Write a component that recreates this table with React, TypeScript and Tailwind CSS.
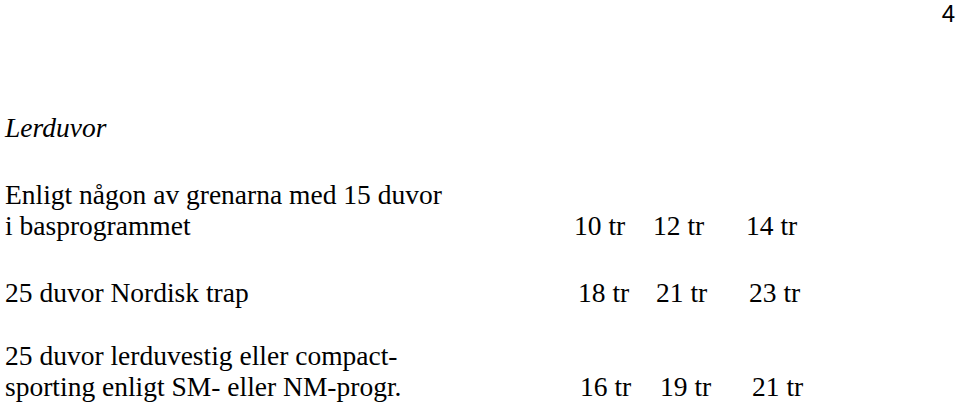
import React from 'react';

// Tabulated values: each placed at its own left offset from the row's start
const Value: React.FC<{ left: number; text: string }> = ({ left, text }) => (
  <span className="absolute top-0" style={{ left }}>
    {text}
  </span>
);

const App: React.FC = () => {
  return (
    <div
      className="w-[959px] h-[406px] overflow-hidden bg-white text-black text-[27.5px] leading-[31px]"
      style={{ fontFamily: '"Liberation Serif", "Times New Roman", serif' }}
    >
      <div className="flex justify-end pr-[4px] h-[31px]">
        <span
          className="text-[24px] leading-[28px] font-light"
          style={{ fontFamily: '"Liberation Sans", Arial, sans-serif' }}
        >
          4
        </span>
      </div>

      <div className="pl-[5px]">
        <p className="mt-[81px] italic">Lerduvor</p>

        <p className="mt-[36px]">Enligt någon av grenarna med 15 duvor</p>
        <div className="relative">
          <span>i basprogrammet</span>
          <Value left={569} text="10 tr" />
          <Value left={648} text="12 tr" />
          <Value left={741} text="14 tr" />
        </div>

        <div className="relative mt-[36px]">
          <span>25 duvor Nordisk trap</span>
          <Value left={573} text="18 tr" />
          <Value left={651} text="21 tr" />
          <Value left={744} text="23 tr" />
        </div>

        <p className="mt-[32px]">25 duvor lerduvestig eller compact-</p>
        <div className="relative">
          <span>sporting enligt SM- eller NM-progr.</span>
          <Value left={575} text="16 tr" />
          <Value left={655} text="19 tr" />
          <Value left={747} text="21 tr" />
        </div>
      </div>
    </div>
  );
};

export default App;
